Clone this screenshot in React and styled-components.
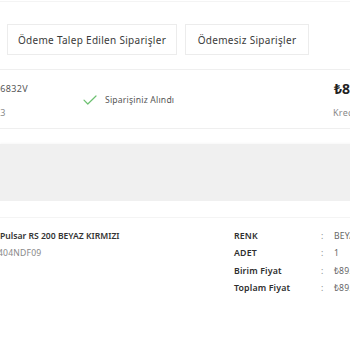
import React from "react";
import styled, { createGlobalStyle } from "styled-components";

const Global = createGlobalStyle`
  html, body { margin: 0; padding: 0; background: #fff; overflow: hidden; }
  body { font-family: "Noto Sans", "DejaVu Sans", sans-serif; color: #444; }
`;

const Page = styled.div`
  width: 420px;
  padding-top: 1px;
`;

const TabsBar = styled.div`
  display: flex;
  gap: 8px;
  padding: 22px 0 14px 7px;
  border-top: 1px solid #f4f4f4;
  border-bottom: 1px solid #efefef;
`;

const TabButton = styled.button`
  height: 31px;
  width: ${(p) => p.$w}px;
  border: 1px solid #ececec;
  background: #fff;
  font-family: inherit;
  font-size: 10px;
  letter-spacing: 0.3px;
  color: #3a3a3a;
  padding: 0;
  display: flex;
  align-items: center;
  justify-content: center;
  white-space: nowrap;
`;

const OrderHeader = styled.div`
  display: grid;
  grid-template-columns: 99px 250px 1fr;
  margin-left: -16px;
  height: 59px;
  border-bottom: 1px solid #efefef;
  align-items: center;
  padding-top: 2px;
  box-sizing: border-box;
`;

const Stack = styled.div`
  display: flex;
  flex-direction: column;
  gap: ${(p) => p.$gap || 11}px;
  white-space: nowrap;
`;

const MetaText = styled.div`
  font-size: 9px;
  letter-spacing: 0.3px;
  line-height: 13px;
  color: ${(p) => (p.$muted ? "#8a8a8a" : "#555")};
`;

const Status = styled.div`
  display: flex;
  align-items: center;
  gap: 8px;
  font-size: 8.6px;
  letter-spacing: 0.2px;
  color: #555;
`;

const Amount = styled.div`
  font-size: 14px;
  font-weight: 700;
  line-height: 13px;
  color: #222;
  margin-left: 1px;
`;

const Spacer = styled.div`
  height: ${(p) => p.$h}px;
`;

const Band = styled.div`
  height: 57px;
  background: #f0f0f0;
  box-shadow: 0 -1px 2px rgba(0, 0, 0, 0.03);
`;

const ProductSection = styled.div`
  display: grid;
  grid-template-columns: 234px 87px 13px 1fr;
  grid-auto-rows: 13.3px;
  border-top: 1px solid #f4f4f4;
  padding-top: 12px;
  row-gap: 4px;
`;

const ProductName = styled.div`
  font-size: 8.6px;
  font-weight: 600;
  color: #333;
  line-height: 13px;
  white-space: nowrap;
`;

const ProductCode = styled.div`
  font-size: 8.6px;
  letter-spacing: 0.2px;
  color: #888;
  line-height: 13px;
  margin-left: -2px;
  white-space: nowrap;
`;

const Label = styled.div`
  font-size: 8.8px;
  letter-spacing: 0.15px;
  font-weight: 600;
  color: #2e2e2e;
  line-height: 13px;
  white-space: nowrap;
`;

const Colon = styled.div`
  font-size: 8.6px;
  color: #888;
  line-height: 13px;
`;

const Value = styled.div`
  font-size: 8.6px;
  letter-spacing: 0.2px;
  color: #666;
  line-height: 13px;
  white-space: nowrap;
`;

const Check = () => (
  <svg width="14" height="10" viewBox="0 0 14 10" fill="none">
    <path d="M1 5.2 L4.8 9 L13 1" stroke="#6cc070" strokeWidth="1.2" strokeLinecap="round" strokeLinejoin="round" />
  </svg>
);

const details = [
  ["RENK", "BEYAZ KIRMIZI"],
  ["ADET", "1"],
  ["Birim Fiyat", "₺89.900,00"],
  ["Toplam Fiyat", "₺89.900,00"],
];

export default function App() {
  return (
    <>
      <Global />
      <Page>
        <TabsBar>
          <TabButton $w={170}>Ödeme Talep Edilen Siparişler</TabButton>
          <TabButton $w={124}>Ödemesiz Siparişler</TabButton>
        </TabsBar>
        <OrderHeader>
          <Stack>
            <MetaText>0006832V</MetaText>
            <MetaText $muted>2023</MetaText>
          </Stack>
          <Status>
            <Check />
            Siparişiniz Alındı
          </Status>
          <Stack>
            <Amount>₺89.900,00</Amount>
            <MetaText $muted>Kredi Kartı</MetaText>
          </Stack>
        </OrderHeader>
        <Spacer $h={15} />
        <Band />
        <Spacer $h={16} />
        <ProductSection>
          <Stack $gap={4} style={{ gridRow: "span 4" }}>
            <ProductName>Pulsar RS 200 BEYAZ KIRMIZI</ProductName>
            <ProductCode>404NDF09</ProductCode>
          </Stack>
          {details.map(([l, v]) => (
            <React.Fragment key={l}>
              <Label>{l}</Label>
              <Colon>:</Colon>
              <Value>{v}</Value>
            </React.Fragment>
          ))}
        </ProductSection>
      </Page>
    </>
  );
}
